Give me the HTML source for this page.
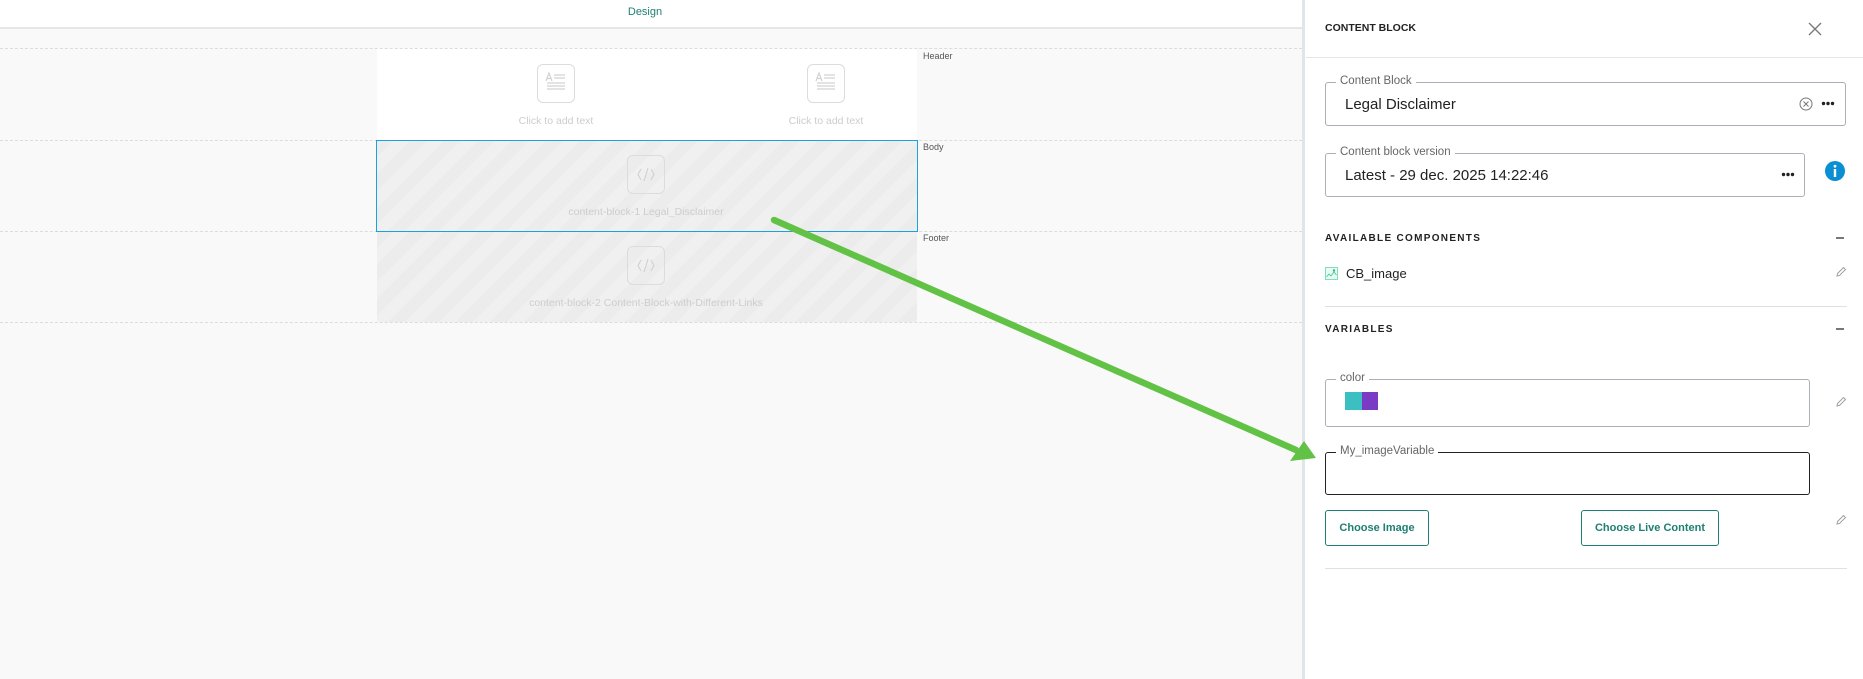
<!DOCTYPE html>
<html><head><meta charset="utf-8"><style>
*{box-sizing:border-box;margin:0;padding:0}
body{width:1863px;height:679px;overflow:hidden;background:#f9f9f9;font-family:"Liberation Sans",sans-serif;position:relative}
.a{position:absolute}
.top{left:0;top:0;width:1302px;height:29px;background:#fff;border-bottom:2px solid #e4e6e8}
.dash{left:0;width:1302px;height:0;border-top:1px dashed #dcdcdc}
.lbl{font-size:9px;color:#555}
.ph{color:#cdcdcd;font-size:10.5px;text-align:center;width:300px}
.ibox{width:38px;height:39px;border:1.5px solid #dcdcdc;border-radius:6px;background:transparent}
.stripe{background:repeating-linear-gradient(135deg,#ececec 0 12px,#f0f0f0 12px 24px)}
.panel{left:1302px;top:0;width:561px;height:679px;background:#fff;border-left:3px solid #e1e4e8}
.fld{border:1px solid #a9b0b7;border-radius:3px;background:#fff}
.flab{position:absolute;top:-8px;left:10px;background:#fff;padding:0 4px;font-size:11.5px;color:#666}
.sec{font-size:10px;font-weight:bold;letter-spacing:1.3px;color:#222}
.btn{border:1.3px solid #1e7f74;border-radius:3px;color:#1e7f74;font-weight:bold;font-size:11px;text-align:center;line-height:34px;height:36px}
</style></head><body>
<div class="a top"></div>
<div class="a" style="left:0;top:6px;width:1290px;text-align:center;font-size:11px;color:#1e7f74">Design</div>
<div class="a" style="left:377px;top:48px;width:540px;height:92px;background:#fff"></div>
<div class="a stripe" style="left:377px;top:140px;width:540px;height:91px"></div>
<div class="a stripe" style="left:377px;top:231px;width:540px;height:91px"></div>
<div class="a dash" style="top:48px"></div>
<div class="a dash" style="top:140px"></div>
<div class="a dash" style="top:231px"></div>
<div class="a dash" style="top:322px"></div>
<div class="a" style="left:376px;top:140px;width:542px;height:92px;border:1px solid #1ea0e0"></div>
<div class="a lbl" style="left:923px;top:51px">Header</div>
<div class="a lbl" style="left:923px;top:142px">Body</div>
<div class="a lbl" style="left:923px;top:233px">Footer</div>
<div class="a ibox" style="left:537px;top:64px"></div>
<div class="a ibox" style="left:807px;top:64px"></div>
<svg class="a" style="left:537px;top:64px" width="38" height="39"><g stroke="#d2d2d2" stroke-width="1.2" fill="none"><path d="M9 17 L12 9 L15 17 M10 14.5 H14"/><path d="M17 11H28M17 14H28M10 19H28M10 22H28M10 25H28"/></g></svg>
<svg class="a" style="left:807px;top:64px" width="38" height="39"><g stroke="#d2d2d2" stroke-width="1.2" fill="none"><path d="M9 17 L12 9 L15 17 M10 14.5 H14"/><path d="M17 11H28M17 14H28M10 19H28M10 22H28M10 25H28"/></g></svg>
<div class="a ph" style="left:406px;top:115px">Click to add text</div>
<div class="a ph" style="left:676px;top:115px">Click to add text</div>
<div class="a ibox" style="left:627px;top:155px"></div>
<div class="a ibox" style="left:627px;top:246px"></div>
<svg class="a" style="left:627px;top:155px" width="38" height="39"><g stroke="#d2d2d2" stroke-width="1.2" fill="none"><path d="M14 14 L11 19.5 L14 25 M24 14 L27 19.5 L24 25 M21 13 L17 26"/></g></svg>
<svg class="a" style="left:627px;top:246px" width="38" height="39"><g stroke="#d2d2d2" stroke-width="1.2" fill="none"><path d="M14 14 L11 19.5 L14 25 M24 14 L27 19.5 L24 25 M21 13 L17 26"/></g></svg>
<div class="a ph" style="left:496px;top:206px">content-block-1 Legal_Disclaimer</div>
<div class="a ph" style="left:446px;top:297px;width:400px">content-block-2 Content-Block-with-Different-Links</div>

<div class="a panel"></div>
<div class="a" style="left:1325px;top:22px;font-size:10.5px;font-weight:bold;color:#222">CONTENT BLOCK</div>
<svg class="a" style="left:1808px;top:22px" width="14" height="14"><path d="M1 1L13 13M13 1L1 13" stroke="#777" stroke-width="1.3"/></svg>
<div class="a" style="left:1306px;top:57px;width:557px;height:1px;background:#e4e6e8"></div>

<div class="a fld" style="left:1325px;top:82px;width:521px;height:44px"><span class="flab">Content Block</span>
<div class="a" style="left:19px;top:13px;font-size:15px;color:#222">Legal Disclaimer</div></div>
<svg class="a" style="left:1799px;top:97px" width="14" height="14"><circle cx="7" cy="7" r="6" fill="none" stroke="#777" stroke-width="1"/><path d="M4.5 4.5L9.5 9.5M9.5 4.5L4.5 9.5" stroke="#777"/></svg>
<svg class="a" style="left:1821px;top:101px" width="14" height="5"><circle cx="2.5" cy="2.5" r="1.7" fill="#222"/><circle cx="7" cy="2.5" r="1.7" fill="#222"/><circle cx="11.5" cy="2.5" r="1.7" fill="#222"/></svg>

<div class="a fld" style="left:1325px;top:153px;width:480px;height:44px"><span class="flab">Content block version</span>
<div class="a" style="left:19px;top:13px;font-size:15px;color:#222">Latest - 29 dec. 2025 14:22:46</div></div>
<svg class="a" style="left:1781px;top:172px" width="14" height="5"><circle cx="2.5" cy="2.5" r="1.7" fill="#222"/><circle cx="7" cy="2.5" r="1.7" fill="#222"/><circle cx="11.5" cy="2.5" r="1.7" fill="#222"/></svg>
<svg class="a" style="left:1825px;top:161px" width="20" height="20"><circle cx="10" cy="10" r="10" fill="#0b8fd3"/><rect x="8.8" y="8" width="2.4" height="8" fill="#fff"/><circle cx="10" cy="5.2" r="1.4" fill="#fff"/></svg>

<div class="a sec" style="left:1325px;top:233px">AVAILABLE COMPONENTS</div>
<div class="a" style="left:1836px;top:237px;width:8px;height:2px;background:#777"></div>
<svg class="a" style="left:1325px;top:267px" width="13" height="13"><rect x="0.5" y="0.5" width="12" height="12" fill="#e9fbf3" stroke="#7fe0c0"/><path d="M1.5 10 L4 7 L6 9 L9 5 L11.5 8" stroke="#4cc89a" fill="none" stroke-width="0.9"/><circle cx="9" cy="3.5" r="1.2" fill="#2fb77a"/></svg>
<div class="a" style="left:1346px;top:266px;font-size:13px;color:#222">CB_image</div>
<svg class="a" style="left:1835px;top:266px" width="12" height="12"><path d="M2 10 L2.5 7.5 L8.5 1.5 L10.5 3.5 L4.5 9.5 Z" fill="none" stroke="#999" stroke-width="0.9"/></svg>
<div class="a" style="left:1325px;top:306px;width:522px;height:1px;background:#e0e0e0"></div>
<div class="a sec" style="left:1325px;top:324px">VARIABLES</div>
<div class="a" style="left:1836px;top:328px;width:8px;height:2px;background:#777"></div>

<div class="a fld" style="left:1325px;top:379px;width:485px;height:48px"><span class="flab">color</span>
<div class="a" style="left:19px;top:12px;width:17px;height:18px;background:#3bbfc1"></div>
<div class="a" style="left:36px;top:12px;width:16px;height:18px;background:#7b3ac4"></div></div>
<svg class="a" style="left:1835px;top:396px" width="12" height="12"><path d="M2 10 L2.5 7.5 L8.5 1.5 L10.5 3.5 L4.5 9.5 Z" fill="none" stroke="#999" stroke-width="0.9"/></svg>

<div class="a fld" style="left:1325px;top:452px;width:485px;height:43px;border-color:#222"><span class="flab">My_imageVariable</span></div>
<div class="a btn" style="left:1325px;top:510px;width:104px">Choose Image</div>
<div class="a btn" style="left:1581px;top:510px;width:138px">Choose Live Content</div>
<svg class="a" style="left:1835px;top:514px" width="12" height="12"><path d="M2 10 L2.5 7.5 L8.5 1.5 L10.5 3.5 L4.5 9.5 Z" fill="none" stroke="#999" stroke-width="0.9"/></svg>
<div class="a" style="left:1325px;top:568px;width:522px;height:1px;background:#e0e0e0"></div>

<svg class="a" style="left:0;top:0" width="1863" height="679"><line x1="774" y1="220" x2="1296" y2="450" stroke="#62c246" stroke-width="6.5" stroke-linecap="round"/><polygon points="1316,458 1290,461 1304,441" fill="#62c246"/></svg>
</body></html>
